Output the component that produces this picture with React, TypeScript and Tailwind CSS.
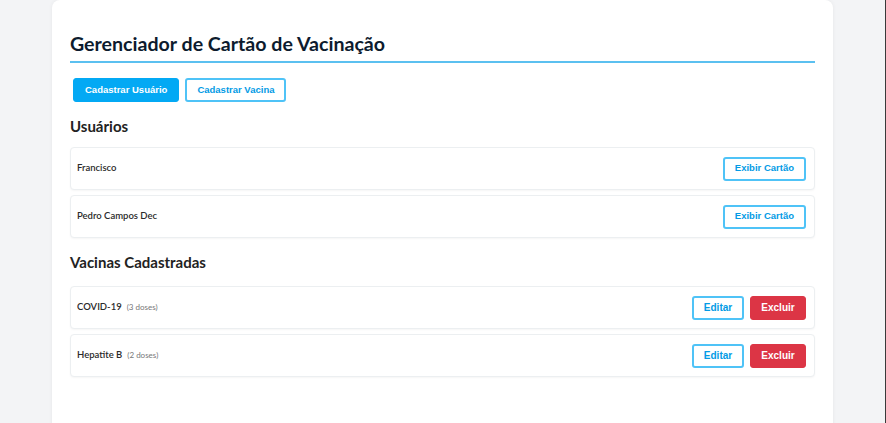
import React from "react";

const users = ["Francisco", "Pedro Campos Dec"];
const vacinas = [
  { nome: "COVID-19", doses: 3 },
  { nome: "Hepatite B", doses: 2 },
];

const btnFont = { fontFamily: '"Liberation Sans", Arial, sans-serif' };

export default function App() {
  return (
    <div className="flex h-[423px] w-[886px] overflow-hidden bg-[#f3f4f6]" style={{ fontFamily: 'Lato, "Noto Sans", sans-serif' }}>
      <div className="flex-1 pl-[52px] pr-[52px]">
        <div className="h-[440px] rounded-lg bg-white px-[18px] pt-[30px] shadow-[0_0_4px_rgba(0,0,0,0.06)]">
          <h1 className="border-b-2 border-[#5bc0f0] pb-[3px] text-[19.6px] font-bold leading-[28px] text-[#0d1b2e]">
            Gerenciador de Cartão de Vacinação
          </h1>
          <div className="mt-[15px] flex gap-[6px] pl-[3px]" style={btnFont}>
            <button className="h-[24px] rounded-[3px] border border-[#03a9f4] bg-[#03a9f4] px-[11px] text-[9.5px] font-bold text-white">
              Cadastrar Usuário
            </button>
            <button className="h-[24px] rounded-[3px] border-2 border-[#4fc3f7] bg-white px-[10px] text-[9.5px] font-bold text-[#039be5]">
              Cadastrar Vacina
            </button>
          </div>
          <h2 className="mt-[13px] text-[15px] font-bold leading-[22px] text-[#222]">Usuários</h2>
          <div className="mt-[10px] flex flex-col gap-[5px]">
            {users.map((u) => (
              <div key={u} className="flex h-[43px] items-center justify-between rounded-[4px] border border-[#eceff1] bg-white pl-[6px] pr-[8px] shadow-[0_1px_2px_rgba(0,0,0,0.04)]">
                <span className="text-[9.5px] font-semibold text-[#2a2a2a]">{u}</span>
                <button className="h-[24px] rounded-[3px] border-2 border-[#4fc3f7] bg-white px-[10px] text-[9.5px] font-bold text-[#039be5]" style={btnFont}>
                  Exibir Cartão
                </button>
              </div>
            ))}
          </div>
          <h2 className="mt-[13px] text-[15px] font-bold leading-[22px] text-[#222]">Vacinas Cadastradas</h2>
          <div className="mt-[13px] flex flex-col gap-[5px]">
            {vacinas.map((v) => (
              <div key={v.nome} className="flex h-[43px] items-center justify-between rounded-[4px] border border-[#eceff1] bg-white pl-[6px] pr-[8px] shadow-[0_1px_2px_rgba(0,0,0,0.04)]">
                <span className="text-[9.5px] font-semibold text-[#2a2a2a]">
                  {v.nome}
                  <span className="ml-[5px] text-[8px] font-normal text-[#777]">({v.doses} doses)</span>
                </span>
                <div className="flex gap-[6px]" style={btnFont}>
                  <button className="h-[24px] w-[52px] rounded-[3px] border-2 border-[#4fc3f7] bg-white text-[10px] font-bold text-[#039be5]">
                    Editar
                  </button>
                  <button className="h-[24px] w-[56px] rounded-[3px] border border-[#dc3545] bg-[#dc3545] text-[10px] font-bold text-white">
                    Excluir
                  </button>
                </div>
              </div>
            ))}
          </div>
        </div>
      </div>
      <div className="w-px bg-[#3a3a3a]" />
    </div>
  );
}
